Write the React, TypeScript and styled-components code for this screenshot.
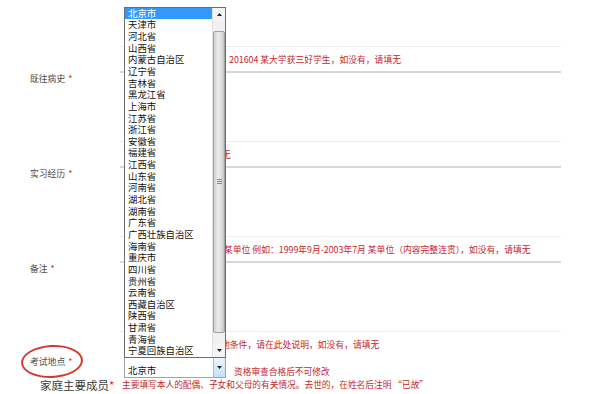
import React from 'react';
import styled, { createGlobalStyle } from 'styled-components';

const GlobalStyle = createGlobalStyle`
  html, body { margin: 0; padding: 0; background: #ffffff; }
  body {
    font-family: "Noto Sans CJK SC", "Noto Sans", sans-serif;
    width: 593px;
    height: 394px;
    overflow: hidden;
  }
  * { box-sizing: border-box; }
`;

const Page = styled.div`
  width: 593px;
  height: 394px;
  overflow: hidden;
  background: #fff;
`;

const Row = styled.div<{ $h?: number }>`
  display: grid;
  grid-template-columns: 120px 441px;
  ${(p) => (p.$h ? `height: ${p.$h}px;` : '')}
`;

const LabelCell = styled.div`
  position: relative;
  padding-left: 30px;
  font-size: 8.8px;
  line-height: 12px;
  color: #4a4a4a;
  white-space: nowrap;
`;

const Star = styled.span`
  color: #d6282c;
  margin-left: 3px;
`;

const HintCell = styled.div<{ $last?: boolean; $indent: number }>`
  height: ${(p) => (p.$last ? 25 : 27)}px;
  border-top: 1px solid #ececec;
  border-bottom: ${(p) => (p.$last ? 'none' : '2px solid #d8d8d8')};
  padding: 3px 0 0 ${(p) => p.$indent}px;
  line-height: 12px;
  white-space: nowrap;
  overflow: hidden;
`;

const HintText = styled.span`
  font-size: 8.8px;
  line-height: 12px;
  color: #c3262c;
`;

const FieldCell = styled.div``;

const ContentCell = styled.div`
  display: flex;
  align-items: flex-end;
  padding-left: 4px;
  padding-top: 1px;
`;

const SelectWrap = styled.div`
  position: relative;
  width: 102px;
`;

const SelectBox = styled.div`
  display: flex;
  height: 21px;
  border: 1px solid #a3a3a3;
  background: #fff;
`;

const SelectValue = styled.div`
  flex: 1;
  align-self: flex-end;
  padding-left: 3px;
  font-family: "Liberation Sans", "Noto Sans CJK SC", sans-serif;
  font-size: 9.4px;
  line-height: 12px;
  color: #111;
`;

const SelectButton = styled.div`
  width: 12px;
  display: flex;
  align-items: center;
  justify-content: center;
  border-left: 1px solid #9cc3df;
  background: linear-gradient(to bottom, #eaf5fd, #c3e1f6);
`;

const ExamNote = styled.div`
  margin-left: 8px;
  font-size: 8.7px;
  line-height: 12px;
  color: #c3262c;
  white-space: nowrap;
`;

const Ellipse = styled.span`
  position: absolute;
  left: 21px;
  top: -11px;
  width: 62px;
  height: 33px;
  border: 2px solid #d7372f;
  border-radius: 50%;
  transform: rotate(-3deg);
`;

const FamilyLabel = styled.div`
  padding-left: 40px;
  font-size: 11.5px;
  line-height: 14px;
  color: #3a3a3a;
  white-space: nowrap;
`;

const FamilyStar = styled.span`
  color: #d6282c;
`;

const FamilyHint = styled.div`
  padding-left: 2px;
  font-size: 8.7px;
  line-height: 14px;
  color: #c3262c;
  white-space: nowrap;
`;

/* Open dropdown list overlay */
const ListBox = styled.div`
  position: absolute;
  left: 0;
  bottom: calc(100% - 1px);
  width: 102px;
  display: flex;
  border: 1px solid #6d6d6d;
  background: #fff;
  z-index: 2;
`;

const Options = styled.div`
  flex: 1;
`;

const Option = styled.div<{ $selected?: boolean }>`
  height: 11.65px;
  padding-left: 3px;
  font-family: "Liberation Sans", "Noto Sans CJK SC", sans-serif;
  font-size: 9.4px;
  line-height: 11.65px;
  white-space: nowrap;
  color: ${(p) => (p.$selected ? '#ffffff' : '#111111')};
  background: ${(p) => (p.$selected ? '#3399ff' : 'transparent')};
`;

const Scrollbar = styled.div`
  width: 13px;
  display: flex;
  flex-direction: column;
  background: #f0f0f0;
  border-left: 1px solid #e2e2e2;
`;

const ScrollButton = styled.div`
  height: 13px;
  display: flex;
  align-items: center;
  justify-content: center;
  background: #f4f4f4;
`;

const Track = styled.div`
  flex: 1;
  display: flex;
  flex-direction: column;
  padding: 10px 0 11px 0;
`;

const Thumb = styled.div`
  flex: 1;
  display: flex;
  align-items: center;
  justify-content: center;
  border: 1px solid #a2a2a2;
  border-radius: 2px;
  background: linear-gradient(to right, #cfcfcf, #ededed 40%, #e0e0e0 70%, #c6c6c6);
`;

const Grip = styled.span`
  width: 5px;
  height: 5px;
  background: repeating-linear-gradient(to bottom, #8a8a8a 0, #8a8a8a 1px, transparent 1px, transparent 2px);
`;

const provinces = [
  '北京市', '天津市', '河北省', '山西省', '内蒙古自治区', '辽宁省', '吉林省', '黑龙江省',
  '上海市', '江苏省', '浙江省', '安徽省', '福建省', '江西省', '山东省', '河南省',
  '湖北省', '湖南省', '广东省', '广西壮族自治区', '海南省', '重庆市', '四川省', '贵州省',
  '云南省', '西藏自治区', '陕西省', '甘肃省', '青海省', '宁夏回族自治区',
];

const Arrow = ({ up }: { up?: boolean }) => (
  <svg width="5" height="3" viewBox="0 0 5 3">
    <polygon points={up ? '0,3 5,3 2.5,0' : '0,0 5,0 2.5,3'} fill="#222" />
  </svg>
);

const fields = [
  { hint: '无', indent: 102, label: '实习经历' },
  { hint: '某单位 例如：1999年9月-2003年7月 某单位（内容完整连贯），如没有，请填无', indent: 104, label: '备注' },
];

export default function App() {
  return (
    <Page>
      <GlobalStyle />
      <Row $h={46}>
        <LabelCell />
        <FieldCell />
      </Row>
      <Row>
        <LabelCell />
        <HintCell $indent={109}>
          <HintText>201604 某大学获三好学生，如没有，请填无</HintText>
        </HintCell>
      </Row>
      <Row $h={68}>
        <LabelCell>
          既往病史<Star>*</Star>
        </LabelCell>
        <FieldCell />
      </Row>
      {fields.map((f) => (
        <React.Fragment key={f.label}>
          <Row>
            <LabelCell />
            <HintCell $indent={f.indent}>
              <HintText>{f.hint}</HintText>
            </HintCell>
          </Row>
          <Row $h={68}>
            <LabelCell>
              {f.label}
              <Star>*</Star>
            </LabelCell>
            <FieldCell />
          </Row>
        </React.Fragment>
      ))}
      <Row>
        <LabelCell />
        <HintCell $last $indent={101}>
          <HintText>他条件，请在此处说明，如没有，请填无</HintText>
        </HintCell>
      </Row>
      <Row $h={22}>
        <LabelCell>
          考试地点<Star>*</Star>
          <Ellipse />
        </LabelCell>
        <ContentCell>
          <SelectWrap>
            <ListBox>
              <Options>
                {provinces.map((p, i) => (
                  <Option key={p} $selected={i === 0}>
                    {p}
                  </Option>
                ))}
              </Options>
              <Scrollbar>
                <ScrollButton>
                  <Arrow up />
                </ScrollButton>
                <Track>
                  <Thumb>
                    <Grip />
                  </Thumb>
                </Track>
                <ScrollButton>
                  <Arrow />
                </ScrollButton>
              </Scrollbar>
            </ListBox>
            <SelectBox>
              <SelectValue>北京市</SelectValue>
              <SelectButton>
                <Arrow />
              </SelectButton>
            </SelectBox>
          </SelectWrap>
          <ExamNote>资格审查合格后不可修改</ExamNote>
        </ContentCell>
      </Row>
      <Row>
        <FamilyLabel>
          家庭主要成员<FamilyStar>*</FamilyStar>
        </FamilyLabel>
        <FamilyHint>主要填写本人的配偶、子女和父母的有关情况。去世的，在姓名后注明 “已故”</FamilyHint>
      </Row>
    </Page>
  );
}
